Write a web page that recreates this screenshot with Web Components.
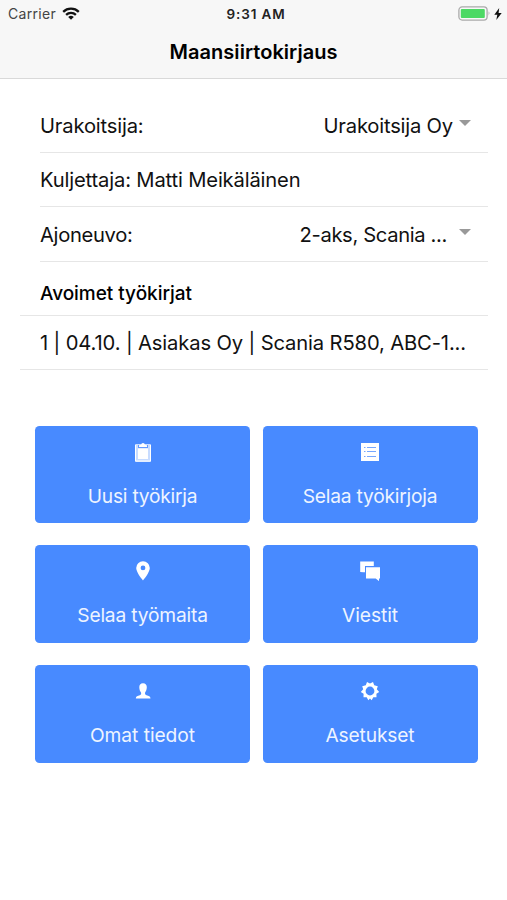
<!DOCTYPE html>
<html lang="fi">
<head>
<meta charset="utf-8">
<title>Maansiirtokirjaus</title>
<style>
html,body{margin:0;background:#fff}
body{font-family:Inter,"Liberation Sans",sans-serif;color:#111;height:900px;overflow:hidden}
</style>
</head>
<body>
<work-app></work-app>
<script>
const define = (name, html, setup) => customElements.define(name, class extends HTMLElement {
  connectedCallback() {
    if (this.shadowRoot) return;
    this.attachShadow({mode: 'open'}).innerHTML = html;
    if (setup) setup(this, this.shadowRoot);
  }
});

const icons = {
  clipboard: '<path fill-opacity=".7" d="M3 2h14q1 0 1 1v16q0 1-1 1H3q-1 0-1-1V3q0-1 1-1z"/><path d="M5 6.500h10V17H5z"/><path fill="#488aff" fill-opacity=".8" d="M5 3h10v3H5z"/><path d="M6 5V3.300l2.200-.6a1.800 1.800 0 0 1 3.600 0l2.200.6V5z"/><path fill="none" stroke="#fff" stroke-width="1" d="M2.500 3v16h15V3"/>',
  list: '<path d="M1 1h18v18H1z"/><path stroke="#488aff" stroke-opacity=".75" stroke-width="1" d="M4 5.500h1.500M7 5.500h9M4 9.500h1.500M7 9.500h9M4 14.500h1.500M7 14.500h9"/>',
  pin: '<path fill-rule="evenodd" d="M10 .3a6.800 6.800 0 0 1 6.800 6.800C16.800 11.600 10 19.500 10 19.500S3.200 11.600 3.200 7.100A6.800 6.800 0 0 1 10 .3zm0 4.200a2.400 2.400 0 1 0 0 4.800 2.400 2.400 0 0 0 0-4.800z"/>',
  chat: '<path d="M.2.500h13.600v4.400H5v6.300H3.500L.2 11z"/><path d="M6 6.200h14v11.300h-1v2.600l-3.300-2.600H6z"/>',
  person: '<path d="M10 2.300c2.500 0 4 1.600 3.800 4.300-.1 2.200-.9 3.900-1.700 4.900-.3 1.300.1 2.300 1.400 2.800 2.200.7 3.900 1 4 3.200H2.800c.1-2.200 1.800-2.500 4-3.200 1.300-.5 1.600-1.500 1.200-2.800-.9-1-1.600-2.700-1.700-4.900C6.100 3.900 7.500 2.300 10 2.300z"/>',
  gear: '<path fill-rule="evenodd" d="M7 .9 10 2.400 13 .9 14.200 4.300 17.800 5.300 16.800 8.200 19.200 11 16.400 12.800 16.500 16.300 13.300 16.300 11.700 19.200 10 17.600 8.300 19.200 6.700 16.300 3.500 16.300 3.600 12.800.8 11 3.200 8.200 2.200 5.300 5.800 4.300zM10 5.600a4.400 4.400 0 1 0 0 8.800 4.400 4.400 0 0 0 0-8.800z"/>'
};

/* Text whose tracking is adjusted so that its advance equals the width attribute. */
define('fit-text', `<style>:host{display:inline-block;white-space:nowrap;flex:none}</style><span><slot></slot></span>`, (el, root) => {
  const span = root.querySelector('span');
  const target = +el.getAttribute('width');
  const natural = span.getBoundingClientRect().width;
  span.style.letterSpacing = (target - natural) / el.textContent.length + 'px';
});

define('status-bar', `<style>
:host{display:grid;grid-template-columns:1fr auto 1fr;align-items:center;height:27px;padding:0 5px 0 8px;box-sizing:border-box;font-size:14px;color:#222}
.left,.right{display:flex;align-items:center}.right{justify-content:flex-end;gap:3px}
.left{gap:6px;color:#444}.time{font-weight:600;font-size:13.5px;padding-left:2px}
svg{display:block}
</style>
<div class="left"><fit-text width="48">Carrier</fit-text>
<svg width="18" height="13" viewBox="0 0 18 13"><g fill="none" stroke="#111" stroke-width="2.300"><path d="M1.200 4.800a11.300 11.300 0 0 1 15.600 0"/><path d="M4.100 7.900a7.100 7.100 0 0 1 9.800 0"/></g><path d="M9 12.700 6.200 10a4 4 0 0 1 5.600 0z" fill="#111"/></svg></div>
<fit-text class="time" width="59">9:31 AM</fit-text>
<div class="right"><svg width="33" height="15" viewBox="0 0 33 15"><rect x=".9" y=".9" width="28.200" height="13.200" rx="3.300" fill="#f8f8f8" stroke="#aaa" stroke-width="1.300"/><rect x="2.800" y="2.900" width="24" height="9.200" rx="1" fill="#4cd964"/><path d="M30.700 5.300q1.800 2.200 0 4.400z" fill="#999"/></svg>
<svg width="8" height="12" viewBox="0 0 8 12"><path d="M5.200 0 .3 6.700h3L2.300 12l5.400-7H4.600z" fill="#111"/></svg></div>`);

define('title-bar', `<style>
:host{display:flex;justify-content:center;align-items:center;height:49px;font-size:20px;font-weight:600;color:#000}
</style><slot></slot>`);

define('list-row', `<style>
:host{display:flex;align-items:center;justify-content:space-between;box-sizing:border-box;height:54px;margin-left:40px;margin-right:19px;border-bottom:1px solid #e6e6e6;font-size:20.200px}
:host([wide]){margin-left:20px;padding-left:20px}
:host([tall]){height:55px;padding-top:1px}
:host([heading]){font-size:19px;font-weight:500;color:#000;padding-top:9px}
</style><slot></slot>`);

define('drop-value', `<style>
:host{display:flex;align-items:center;margin-right:17px}
i{width:0;height:0;border:6px solid transparent;border-top:6px solid #999;border-bottom:0;margin:-5px 0 0 var(--gap,6px)}
</style><slot></slot><i></i>`);

define('tile-button', `<style>
:host{display:flex;flex-direction:column;align-items:center;box-sizing:border-box;height:97.500px;padding-top:16px;border-radius:4.500px;background:#488aff;color:#eef4ff;font-size:19.200px}
svg{display:block;width:20px;height:20px;fill:#fff;margin-bottom:22px}
div{line-height:25px}
</style><svg viewBox="0 0 20 20"></svg><div><slot></slot></div>`, (el, root) => {
  root.querySelector('svg').innerHTML = icons[el.getAttribute('icon')];
});

define('work-app', `<style>
:host{display:block}
header{height:79px;box-sizing:border-box;background:#f7f7f7;border-bottom:1px solid #d9d9d9}
.list{padding-top:20px}
.tiles{display:grid;grid-template-columns:215px 215px;gap:22.300px 12.500px;padding:55.600px 0 0 35px}
</style>
<header><status-bar></status-bar><title-bar><fit-text width="168">Maansiirtokirjaus</fit-text></title-bar></header>
<div class="list">
<list-row><fit-text width="103.500">Urakoitsija:</fit-text><drop-value><fit-text width="129.500">Urakoitsija Oy</fit-text></drop-value></list-row>
<list-row><fit-text width="260.500">Kuljettaja: Matti Meikäläinen</fit-text></list-row>
<list-row tall><fit-text width="92.500">Ajoneuvo:</fit-text><drop-value style="--gap:12px"><fit-text width="147.500">2-aks, Scania ...</fit-text></drop-value></list-row>
<list-row wide heading><fit-text width="152">Avoimet työkirjat</fit-text></list-row>
<list-row wide><fit-text width="426">1 | 04.10. | Asiakas Oy | Scania R580, ABC-1...</fit-text></list-row>
</div>
<div class="tiles">
<tile-button icon="clipboard"><fit-text width="109.500">Uusi työkirja</fit-text></tile-button>
<tile-button icon="list"><fit-text width="134.500">Selaa työkirjoja</fit-text></tile-button>
<tile-button icon="pin"><fit-text width="130.500">Selaa työmaita</fit-text></tile-button>
<tile-button icon="chat"><fit-text width="56">Viestit</fit-text></tile-button>
<tile-button icon="person"><fit-text width="105">Omat tiedot</fit-text></tile-button>
<tile-button icon="gear"><fit-text width="89">Asetukset</fit-text></tile-button>
</div>`);
</script>
</body>
</html>
